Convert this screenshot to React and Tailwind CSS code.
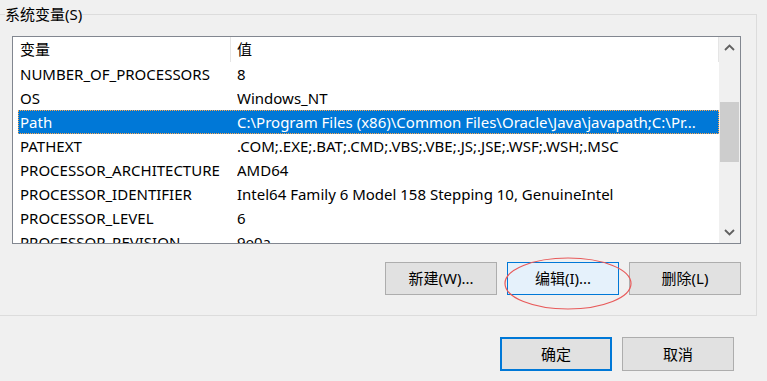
const rows = [
    ["NUMBER_OF_PROCESSORS", "8"],
    ["OS", "Windows_NT"],
    ["Path", "C:\\Program Files (x86)\\Common Files\\Oracle\\Java\\javapath;C:\\Pr..."],
    ["PATHEXT", ".COM;.EXE;.BAT;.CMD;.VBS;.VBE;.JS;.JSE;.WSF;.WSH;.MSC"],
    ["PROCESSOR_ARCHITECTURE", "AMD64"],
    ["PROCESSOR_IDENTIFIER", "Intel64 Family 6 Model 158 Stepping 10, GenuineIntel"],
    ["PROCESSOR_LEVEL", "6"],
    ["PROCESSOR_REVISION", "9e0a"],
];

const selectedIdx = 2;

function Chevron({ up }) {
    return (
        <svg width="11" height="7" viewBox="0 0 11 7">
            <path
                d={up ? "M1 6 L5.5 1.5 L10 6" : "M1 1 L5.5 5.5 L10 1"}
                fill="none"
                stroke="#606060"
                strokeWidth="1.8"
            />
        </svg>
    );
}

function Button({ children, active }) {
    return (
        <button
            className={
                active
                    ? "w-[112px] h-[33px] border border-[#0078d7] bg-[#e5f1fb] text-black"
                    : "w-[112px] h-[33px] border border-[#adadad] bg-[#e1e1e1] text-black"
            }
        >
            {children}
        </button>
    );
}

export default function App() {
    return (
        <div className="relative w-[767px] h-[381px] overflow-hidden bg-[#f0f0f0] text-[15px] text-black font-['Noto_Sans','Noto_Sans_CJK_SC',sans-serif]">
            <fieldset className="mt-[4px] -ml-[11px] w-[768px] border border-[#dcdcdc] p-0">
                <legend className="ml-[15px] p-0 leading-[20px]">系统变量(S)</legend>
                <div className="pl-[22px] pr-[15px] pt-[12px] pb-[20px]">
                    {/* list view */}
                    <div className="flex h-[208px] border border-[#828790] bg-white">
                        <div className="flex-1 overflow-hidden pl-[5px]">
                            <div className="flex h-[25px] items-center">
                                <div className="w-[213px] h-full flex items-center pl-[2px] border-r border-[#e5e5e5]">
                                    变量
                                </div>
                                <div className="flex-1 h-full flex items-center pl-[6px] border-r border-[#e5e5e5]">
                                    值
                                </div>
                            </div>
                            {rows.map((row, idx) => (
                                <div
                                    key={row[0]}
                                    className={
                                        idx === selectedIdx
                                            ? "flex h-[24px] items-center bg-[#0078d7] text-white outline-1 outline-dotted outline-[#ffa64d] -outline-offset-1"
                                            : "flex h-[24px] items-center"
                                    }
                                >
                                    <div className="w-[219px] pl-[2px] whitespace-nowrap">{row[0]}</div>
                                    <div className="flex-1 whitespace-nowrap overflow-hidden">{row[1]}</div>
                                </div>
                            ))}
                        </div>
                        {/* scrollbar */}
                        <div className="w-[21px] flex flex-col bg-[#f0f0f0]">
                            <div className="h-[21px] flex items-center justify-center">
                                <Chevron up />
                            </div>
                            <div className="flex-1">
                                <div className="mt-[44px] ml-px w-[19px] h-[60px] bg-[#cdcdcd]" />
                            </div>
                            <div className="h-[21px] flex items-center justify-center">
                                <Chevron />
                            </div>
                        </div>
                    </div>
                    <div className="mt-[18px] flex justify-end gap-[10px]">
                        <Button>新建(W)...</Button>
                        <Button active>编辑(I)...</Button>
                        <Button>删除(L)</Button>
                    </div>
                </div>
            </fieldset>
            <div className="mt-[21px] mr-[33px] flex justify-end gap-[10px]">
                <button className="w-[112px] h-[34px] border-2 border-[#0078d7] bg-[#e1e1e1]">确定</button>
                <button className="w-[112px] h-[34px] border border-[#adadad] bg-[#e1e1e1]">取消</button>
            </div>
            {/* red annotation ellipse */}
            <svg className="absolute left-[500px] top-[255px]" width="136" height="58" viewBox="0 0 136 58">
                <ellipse cx="68" cy="28.5" rx="63" ry="25.5" fill="none" stroke="#e85a5a" strokeWidth="1.2" />
            </svg>
        </div>
    );
}
